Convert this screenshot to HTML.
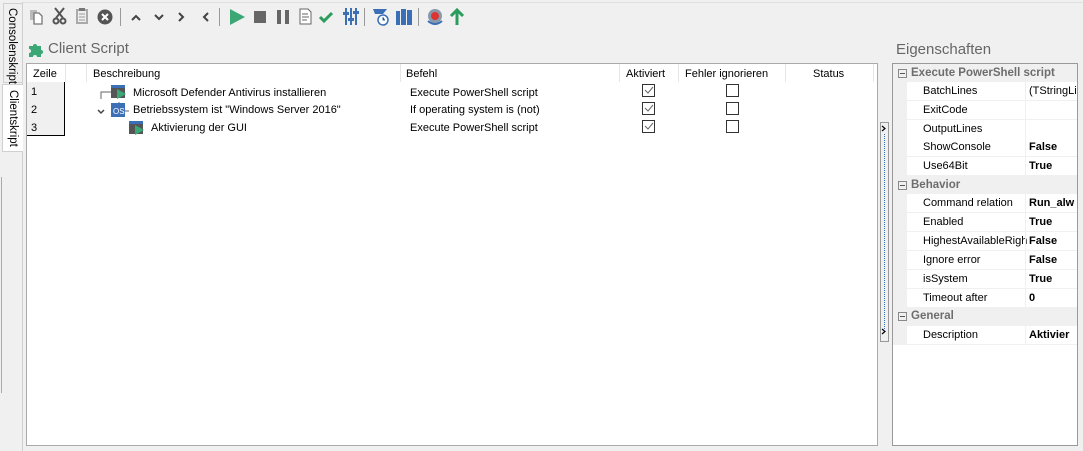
<!DOCTYPE html>
<html><head><meta charset="utf-8"><style>
*{margin:0;padding:0;box-sizing:border-box}
body{width:1083px;height:451px;background:#f0f0f0;font-family:"Liberation Sans",sans-serif;font-size:11px;color:#000;position:relative;overflow:hidden}
.a{position:absolute}
.vt{position:absolute;writing-mode:vertical-rl;font-size:11.5px;line-height:18px;text-align:left}
.cell{position:absolute;white-space:nowrap;font-size:11px}
.pr{position:absolute;left:907px;width:170px;height:19px;background:#fff;border-bottom:1px solid #f0f0f0}
.pr .n{position:absolute;left:16px;top:3px}
.pr .v{position:absolute;left:118px;top:0;height:18px;border-left:1px solid #f0f0f0;padding:3px 0 0 3px;width:52px;overflow:hidden;white-space:nowrap;font-weight:bold}
.gr{position:absolute;left:893px;width:184px;height:19px;background:#f0f0f0;color:#6d6d6d;font-weight:bold;font-size:11.5px}
.gr span{position:absolute;left:18px;top:3px}
.gr i{position:absolute;left:5px;top:5px;width:9px;height:9px;border:1px solid #888;font-style:normal}
.gr i:after{content:"";position:absolute;left:1px;top:3px;width:5px;height:1px;background:#555}
.sep{position:absolute;top:8px;width:1px;height:18px;background:#999}
</style></head><body>
<div class="a" style="left:22px;top:2px;width:1061px;height:449px;border-left:1px solid #d0d0d0;border-top:1px solid #e0e0e0"></div>
<div class="a" style="left:3px;top:3px;width:19px;height:80px;border:1px solid #d0d0d0;border-right:none;background:#f0f0f0"></div>
<div class="vt" style="left:3px;top:8px">Consolenskript</div>
<div class="a" style="left:2px;top:84px;width:21px;height:68px;border:1px solid #d0d0d0;border-right:none;background:#fff"></div>
<div class="vt" style="left:4px;top:90px;color:#000">Clientskript</div>
<div class="a" style="left:1px;top:177px;width:1px;height:216px;background:#aaa"></div>

<svg class="a" style="left:24px;top:4px" width="450" height="26" viewBox="24 4 450 26">
<g fill="none" stroke="#777" stroke-width="1.3"><rect x="30" y="10" width="7" height="10" fill="#bbb" stroke="none"/><path d="M34 13h5l3 3v8h-8z" fill="#fff"/></g>
<g stroke="#555" stroke-width="2" fill="none"><path d="M55 8l8 10M64 8l-8 10"/><circle cx="56" cy="21" r="2.5"/><circle cx="63" cy="21" r="2.5"/></g>
<g><rect x="76" y="9" width="12" height="15" fill="#aaa"/><rect x="78" y="11" width="8" height="11" fill="#eee"/><rect x="79" y="8" width="6" height="3" fill="#777"/><path d="M79 14h6M79 17h6M79 20h6" stroke="#999"/></g>
<circle cx="105" cy="17" r="7.5" fill="#555"/><path d="M102 14l6 6M108 14l-6 6" stroke="#fff" stroke-width="2"/>
<g stroke="#444" stroke-width="2" fill="none"><path d="M132 20l4-4 4 4"/><path d="M155 15l4 4 4-4"/><path d="M179 13l4 4-4 4"/><path d="M208 13l-4 4 4 4"/></g>
<path d="M230 9l15 8-15 8z" fill="#3aa775"/>
<rect x="254" y="11" width="12" height="12" fill="#666"/>
<rect x="277" y="10" width="4" height="14" fill="#666"/><rect x="285" y="10" width="4" height="14" fill="#666"/>
<path d="M300 9h8l3 3v12h-11z" fill="#fff" stroke="#666"/><path d="M302 14h6M302 17h7M302 20h5" stroke="#666"/>
<path d="M320 17l4 4 8-8" stroke="#2a9d5c" stroke-width="3" fill="none"/>
<g stroke="#3b6fb6" stroke-width="2"><path d="M346 8v17M351 8v17M356 8v17"/></g><g fill="#3b6fb6"><rect x="343" y="12" width="6" height="3"/><rect x="348" y="18" width="6" height="3"/><rect x="353" y="11" width="6" height="3"/></g>
<path d="M373 9h14l-4 5h-8z" fill="#3b6fb6"/><circle cx="383" cy="20" r="5" fill="#fff" stroke="#3b6fb6" stroke-width="1.5"/><path d="M383 17v3h2" stroke="#3b6fb6"/>
<g fill="#3b6fb6"><rect x="396" y="11" width="4" height="14"/><rect x="401" y="9" width="5" height="16"/><rect x="407" y="10" width="5" height="15"/></g>
<circle cx="435" cy="16" r="7" fill="#8899aa"/><circle cx="435" cy="16" r="4" fill="#d33"/><path d="M428 21q7 6 14 0" stroke="#3b6fb6" stroke-width="2" fill="none"/>
<path d="M457 25V11M451 16l6-6 6 6" stroke="#2a9d5c" stroke-width="3" fill="none"/>
</svg>
<div class="sep" style="left:120px"></div><div class="sep" style="left:219px"></div><div class="sep" style="left:364px"></div><div class="sep" style="left:418px"></div>

<svg class="a" style="left:28px;top:41px" width="16" height="16" viewBox="0 0 16 16"><path d="M1 5h4a2 2 0 1 1 4 0h4v4a2 2 0 1 1 0 4v3H9a2 2 0 1 0-4 0H1v-4a2 2 0 1 0 0-4z" fill="#3aa775"/></svg>
<div class="a" style="left:48px;top:40px;font-size:15px;color:#666">Client Script</div>
<div class="a" style="left:896px;top:41px;font-size:15px;color:#666">Eigenschaften</div>

<div class="a" style="left:26px;top:63px;width:852px;height:383px;background:#fff;border:1px solid #aaa"></div>
<div class="a" style="left:27px;top:82px;width:38px;height:54px;background:#f0f0f0;border-right:1px solid #000;border-bottom:1px solid #000"></div>
<div class="a" style="left:65px;top:64px;width:1px;height:18px;background:#e6e6e6"></div>
<div class="a" style="left:86px;top:64px;width:1px;height:18px;background:#e6e6e6"></div>
<div class="a" style="left:400px;top:64px;width:1px;height:18px;background:#e6e6e6"></div>
<div class="a" style="left:619px;top:64px;width:1px;height:18px;background:#e6e6e6"></div>
<div class="a" style="left:678px;top:64px;width:1px;height:18px;background:#e6e6e6"></div>
<div class="a" style="left:785px;top:64px;width:1px;height:18px;background:#e6e6e6"></div>
<div class="a" style="left:873px;top:64px;width:1px;height:18px;background:#e6e6e6"></div>
<div class="cell" style="left:33px;top:68px">Zeile</div>
<div class="cell" style="left:93px;top:68px">Beschreibung</div>
<div class="cell" style="left:406px;top:68px">Befehl</div>
<div class="cell" style="left:626px;top:68px">Aktiviert</div>
<div class="cell" style="left:685px;top:68px">Fehler ignorieren</div>
<div class="cell" style="left:813px;top:68px">Status</div>

<div class="cell" style="left:31px;top:86px">1</div>
<div class="cell" style="left:31px;top:104px">2</div>
<div class="cell" style="left:31px;top:122px">3</div>

<svg class="a" style="left:95px;top:84px" width="60" height="54">
<path d="M6 15V8h10M24 18v9h10" stroke="#666" fill="none"/>
<rect x="16" y="1" width="14" height="13" fill="#555"/><rect x="16" y="1" width="14" height="3" fill="#3b6fb6"/><path d="M22 5l9 5-9 5z" fill="#3aa775"/>
<path d="M3 26l3 3 3-3" stroke="#444" stroke-width="1.5" fill="none"/>
<rect x="16" y="19" width="14" height="14" fill="#3b6fb6"/><text x="18" y="30" font-size="8" fill="#fff" font-family="Liberation Sans">OS</text>
<rect x="34" y="37" width="14" height="13" fill="#555"/><rect x="34" y="37" width="14" height="3" fill="#3b6fb6"/><path d="M40 41l9 5-9 5z" fill="#3aa775"/>
</svg>
<div class="cell" style="left:133px;top:87px">Microsoft Defender Antivirus installieren</div>
<div class="cell" style="left:133px;top:104px">Betriebssystem ist "Windows Server 2016"</div>
<div class="cell" style="left:151px;top:122px">Aktivierung der GUI</div>
<div class="cell" style="left:410px;top:87px">Execute PowerShell script</div>
<div class="cell" style="left:410px;top:104px">If operating system is (not)</div>
<div class="cell" style="left:410px;top:122px">Execute PowerShell script</div>
<svg class="a" style="left:642px;top:84px" width="100" height="54">
<g fill="#fff" stroke="#333"><rect x="0.5" y="0.5" width="12" height="12"/><rect x="0.5" y="18.5" width="12" height="12"/><rect x="0.5" y="36.5" width="12" height="12"/>
<rect x="84.5" y="0.5" width="12" height="12"/><rect x="84.5" y="18.5" width="12" height="12"/><rect x="84.5" y="36.5" width="12" height="12"/></g>
<g stroke="#666" fill="none"><path d="M3 6l3 3 5-6M3 24l3 3 5-6M3 42l3 3 5-6"/></g>
</svg>

<svg class="a" style="left:880px;top:122px" width="10" height="221">
<rect x="0.5" y="0.5" width="8" height="219" fill="#f0f0f0" stroke="#999"/>
<path d="M4.5 12V208" stroke="#3b6fb6" stroke-dasharray="1 1"/>
<path d="M2 4l3 2.5L2 9M2 207l3 2.5L2 212" stroke="#000" stroke-width="1.2" fill="none"/>
</svg>

<div class="a" style="left:892px;top:63px;width:186px;height:383px;border:1px solid #999;background:#fff"></div>
<div class="a" style="left:893px;top:64px;width:14px;height:281px;background:#f0f0f0"></div>
<div class="gr" style="top:64px"><i></i><span>Execute PowerShell script</span></div>
<div class="pr" style="top:82px"><span class="n">BatchLines</span><span class="v" style="font-weight:normal">(TStringLi</span></div>
<div class="pr" style="top:101px"><span class="n">ExitCode</span><span class="v"></span></div>
<div class="pr" style="top:120px"><span class="n">OutputLines</span><span class="v"></span></div>
<div class="pr" style="top:138px"><span class="n">ShowConsole</span><span class="v">False</span></div>
<div class="pr" style="top:157px"><span class="n">Use64Bit</span><span class="v">True</span></div>
<div class="gr" style="top:176px"><i></i><span>Behavior</span></div>
<div class="pr" style="top:194px"><span class="n">Command relation</span><span class="v">Run_alw</span></div>
<div class="pr" style="top:213px"><span class="n">Enabled</span><span class="v">True</span></div>
<div class="pr" style="top:232px"><span class="n">HighestAvailableRigh</span><span class="v">False</span></div>
<div class="pr" style="top:251px"><span class="n">Ignore error</span><span class="v">False</span></div>
<div class="pr" style="top:270px"><span class="n">isSystem</span><span class="v">True</span></div>
<div class="pr" style="top:289px"><span class="n">Timeout after</span><span class="v">0</span></div>
<div class="gr" style="top:307px"><i></i><span>General</span></div>
<div class="pr" style="top:326px"><span class="n">Description</span><span class="v">Aktivier</span></div>
</body></html>
